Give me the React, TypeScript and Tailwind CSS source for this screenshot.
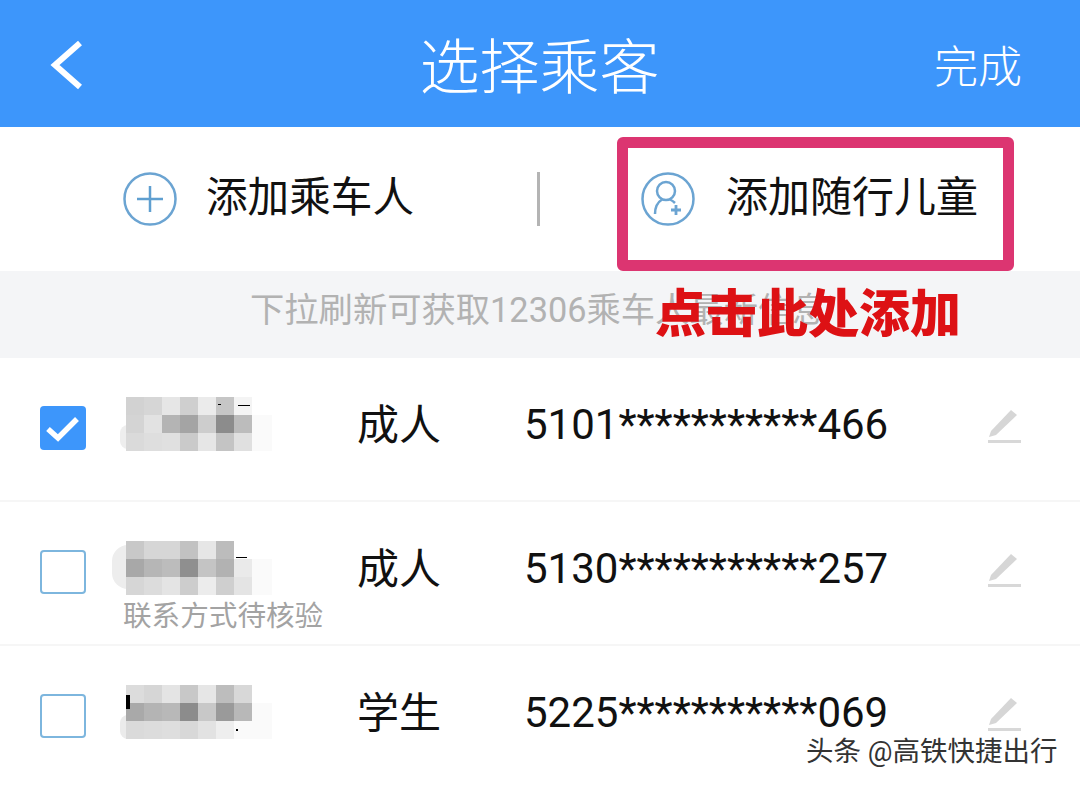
const cjk = "font-['Roboto','Noto_Sans_CJK_SC',sans-serif]";

type Passenger = {
  checked: boolean;
  kind: string;
  id: string;
  note?: string;
  blocks: string[][];
  smudge: string;
  specks: string[];
};

const passengers: Passenger[] = [
  {
    checked: true,
    kind: "成人",
    id: "5101***********466",
    smudge: "left-[-6px] top-[28px] h-[24px] w-[10px] rounded-l-lg bg-[#eeeeee]",
    specks: ["left-[112px] top-[8px] h-[1px] w-[12px]", "left-[92px] top-[7px] h-[1px] w-[3px]"],
    blocks: [
      ["#d2d2d2", "#d6d6d6", "#e6e6e6", "#cfcfcf", "#ebebeb", "#c6c6c6", "#f4f4f4"],
      ["#d4d4d4", "#e2e2e2", "#b4b4b4", "#a4a4a4", "#cdcdcd", "#8c8c8c", "#bcbcbc"],
      ["#dadada", "#dedede", "#e0e0e0", "#cacaca", "#e6e6e6", "#c4c4c4", "#e0e0e0"],
    ],
  },
  {
    checked: false,
    kind: "成人",
    id: "5130***********257",
    note: "联系方式待核验",
    smudge: "left-[-14px] top-[4px] h-[44px] w-[18px] rounded-l-2xl bg-[#ededed]",
    specks: ["left-[110px] top-[16px] h-[1px] w-[11px]"],
    blocks: [
      ["#c8c8c8", "#d6d6d6", "#d6d6d6", "#c2c2c2", "#e6e6e6", "#bcbcbc", "#ffffff"],
      ["#a8a8a8", "#b6b6b6", "#bcbcbc", "#8f8f8f", "#c4c4c4", "#b2b2b2", "#eaeaea"],
      ["#d6d6d6", "#dcdcdc", "#e4e4e4", "#cdcdcd", "#ececec", "#cfcfcf", "#e4e4e4"],
    ],
  },
  {
    checked: false,
    kind: "学生",
    id: "5225***********069",
    smudge: "left-[-6px] top-[30px] h-[24px] w-[10px] rounded-l-lg bg-[#ebebeb]",
    specks: ["left-[0px] top-[10px] h-[14px] w-[4px]", "left-[110px] top-[44px] h-[2px] w-[2px]"],
    blocks: [
      ["#dcdcdc", "#d6d6d6", "#e4e4e4", "#c8c8c8", "#e6e6e6", "#bdbdbd", "#d8d8d8"],
      ["#a9a9a9", "#b4b4b4", "#b8b8b8", "#8c8c8c", "#c8c8c8", "#9a9a9a", "#b8b8b8"],
      ["#dadada", "#dcdcdc", "#dedede", "#d8d8d8", "#e2e2e2", "#eeeeee", "#fafafa"],
    ],
  },
];

function BackIcon() {
  return (
    <svg width="34" height="50" viewBox="0 0 34 50">
      <path d="M31 3 L6 25 L31 47" fill="none" stroke="white" strokeWidth="6" />
    </svg>
  );
}

function PlusCircle() {
  return (
    <svg width="54" height="54" viewBox="0 0 54 54">
      <circle cx="27" cy="27" r="25.5" fill="none" stroke="#6ba4d2" strokeWidth="2.5" />
      <path d="M14 27 H40 M27 14 V40" fill="none" stroke="#5f9fd0" strokeWidth="2.5" />
    </svg>
  );
}

function ChildCircle() {
  return (
    <svg width="54" height="54" viewBox="0 0 54 54" fill="none" stroke="#6ba4d2" strokeWidth="2.5">
      <circle cx="27" cy="27" r="25.5" />
      <circle cx="25" cy="19" r="9" />
      <path d="M14 42 C14 34 17 30 21 27.5 M29 27.5 C31 28.5 33 30 34 31" />
      <path d="M30 38 H40 M35 33 V43" strokeWidth="2.8" />
    </svg>
  );
}

function PencilIcon() {
  return (
    <svg width="36" height="36" viewBox="0 0 36 36">
      <path d="M4 22 L24 1 L30 6 L9 26 L2 28 Z" fill="#d6d6d6" />
      <rect x="1" y="31" width="33" height="3" fill="#d8d8d8" />
    </svg>
  );
}

function Mosaic({ p }: { p: Passenger }) {
  return (
    <div className="relative h-[54px] w-[126px]">
      <div className={`absolute ${p.smudge}`} />
      <div className="absolute left-[126px] top-[18px] h-[36px] w-[20px] bg-[#fafafa]" />
      <div className="relative grid grid-cols-[repeat(7,18px)] grid-rows-[repeat(3,18px)]">
        {p.blocks.flat().map((c, i) => (
          <div key={i} style={{ backgroundColor: c }} />
        ))}
      </div>
      {p.specks.map((s) => (
        <div key={s} className={`absolute bg-black ${s}`} />
      ))}
    </div>
  );
}

function Row({ p }: { p: Passenger }) {
  return (
    <div className="flex h-[144px] items-start border-b-2 border-[#f6f6f6] pl-[40px] pt-[39px]">
      {p.checked ? (
        <div className="mt-[9px] flex h-[44px] w-[46px] items-center justify-center rounded-[4px] bg-[#3d96fb]">
          <svg width="34" height="28" viewBox="0 0 34 28">
            <path d="M2 15 L12 24 L31 5" fill="none" stroke="white" strokeWidth="5.5" />
          </svg>
        </div>
      ) : (
        <div className="mt-[9px] h-[44px] w-[46px] rounded-[4px] border-2 border-[#7db6de]" />
      )}
      <div className="ml-[40px] w-[231px]">
        <Mosaic p={p} />
        {p.note && (
          <div className="-ml-[3px] mt-[4px] text-[28.6px] leading-[34px] text-[#a3a3a3]">{p.note}</div>
        )}
      </div>
      <div className="mt-[2px] w-[167px] text-[42px] leading-[54px] text-[#111]">{p.kind}</div>
      <div className="mt-[1px] w-[463px] text-[42px] leading-[54px] text-[#111]">{p.id}</div>
      <div className="mt-[12px] flex">
        <PencilIcon />
      </div>
    </div>
  );
}

export default function App() {
  return (
    <div className={`relative h-[787px] w-[1080px] overflow-hidden bg-white ${cjk}`}>
      {/* Header */}
      <div className="flex h-[127px] items-center bg-[#3d96fb] pt-[2px] text-white">
        <div className="flex-1 pl-[49px]">
          <BackIcon />
        </div>
        <div className="ml-[8px] mt-[8px] text-[60px] font-light leading-none">选择乘客</div>
        <div className="mt-[6px] flex-1 pr-[58px] text-right text-[44px] font-light leading-none">完成</div>
      </div>

      {/* Add buttons */}
      <div className="flex h-[144px] items-center">
        <div className="flex w-[537px] items-center pl-[123px]">
          <PlusCircle />
          <span className="mb-[3px] ml-[29px] text-[41.6px] leading-none text-[#111]">添加乘车人</span>
        </div>
        <div className="h-[54px] w-[3px] bg-[#b4b4b4]" />
        <div className="flex items-center pl-[101px]">
          <ChildCircle />
          <span className="mb-[3px] ml-[31px] text-[42px] leading-none text-[#111]">添加随行儿童</span>
        </div>
      </div>

      {/* Notice */}
      <div className="flex h-[87px] items-center bg-[#f4f5f7] pb-[8px] pl-[250px] text-[34.3px] text-[#b2b2b2]">
        下拉刷新可获取12306乘车人最新信息
      </div>

      {passengers.map((p) => (
        <Row key={p.id} p={p} />
      ))}

      {/* Annotation */}
      <div className="absolute left-[617px] top-[137px] h-[134px] w-[397px] rounded-[6px] border-[11px] border-[#dc3571]" />
      <div className="absolute left-[655px] top-[279px] text-[51px] font-black leading-[72px] text-[#dd1114]">
        点击此处添加
      </div>

      {/* Watermark */}
      <div className="absolute left-[806px] top-[734px] text-[27.5px] leading-[36px] text-[#333] [text-shadow:0_0_2px_white,0_0_2px_white]">
        头条 @高铁快捷出行
      </div>
    </div>
  );
}
